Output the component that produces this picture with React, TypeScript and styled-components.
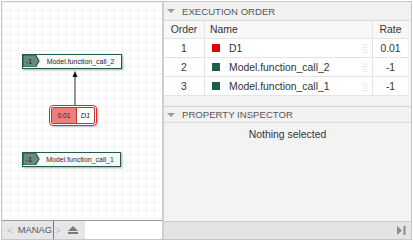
import styled, { createGlobalStyle } from 'styled-components';

const GlobalStyle = createGlobalStyle`
  html, body {
    margin: 0;
    padding: 0;
    background: #fff;
  }
  body {
    font-family: "Liberation Sans", Arial, sans-serif;
  }
`;

// Outer window
const Frame = styled.div`
  margin: 1px 0 0 1px;
  width: 411px;
  height: 239px;
  box-sizing: border-box;
  border: 1px solid #c6c6c6;
  display: flex;
`;

const LeftPane = styled.div`
  width: 160px;
  display: flex;
  flex-direction: column;
`;

const Divider = styled.div`
  width: 2px;
  background: #cfcfcf;
`;

const RightPane = styled.div`
  flex: 1;
  display: flex;
  flex-direction: column;
  background: #f3f3f3;
`;

// Diagram canvas
const Canvas = styled.div`
  position: relative;
  flex: 1;
  background-color: #fff;
  background-image:
    linear-gradient(to right, #f4f4f4 1px, transparent 1px),
    linear-gradient(to bottom, #f4f4f4 1px, transparent 1px);
  background-size: 8px 8px;
  border-bottom: 1px solid #9a9a9a;
`;

const FcNode = styled.div<{ $x: number; $y: number; $w: number }>`
  position: absolute;
  left: ${p => p.$x}px;
  top: ${p => p.$y}px;
  width: ${p => p.$w}px;
  height: 15px;
  box-sizing: border-box;
  border: 1.5px solid #215a48;
  background: #f8f8f8;
  box-shadow: 1px 1px 2px rgba(0, 0, 0, 0.35);
  display: flex;
  align-items: stretch;
`;

const Badge = styled.div`
  position: relative;
  width: 17px;
  display: flex;
  align-items: center;
  padding-left: 3px;
  box-sizing: border-box;
  font-size: 7px;
  color: #111;

  svg {
    position: absolute;
    left: 0;
    top: 0;
  }
  span {
    position: relative;
  }
`;

const FcLabel = styled.div`
  flex: 1;
  display: flex;
  align-items: center;
  justify-content: center;
  font-size: 7px;
  color: #2a2a2a;
  white-space: nowrap;
`;

const RateNode = styled.div`
  position: absolute;
  left: 47px;
  top: 103px;
  width: 48px;
  height: 21px;
  box-sizing: border-box;
  border: 1.5px solid #e2262c;
  border-radius: 4px;
  background: #fff;
  padding: 1px;
  box-shadow: 1px 1px 2px rgba(0, 0, 0, 0.25);
`;

const RateInner = styled.div`
  height: 100%;
  box-sizing: border-box;
  border: 1px solid #c0392b;
  border-radius: 2px;
  display: flex;
  overflow: hidden;
`;

const RateValue = styled.div`
  width: 24px;
  background: #ef7d7d;
  border-right: 1px solid #c0392b;
  display: flex;
  align-items: center;
  justify-content: center;
  font-size: 6.5px;
  color: #222;
`;

const RateName = styled.div`
  flex: 1;
  display: flex;
  align-items: center;
  justify-content: center;
  font-size: 7.5px;
  font-style: italic;
  color: #222;
`;

const Arrow = styled.svg`
  position: absolute;
  left: 67px;
  top: 68px;
`;

const LeftBar = styled.div`
  height: 18px;
  display: flex;
  background: #fff;
`;

const TabStrip = styled.div`
  width: 83px;
  background: #e6e6e6;
  display: flex;
  align-items: center;
  font-size: 9.3px;
  color: #4a5666;
`;

const Chevron = styled.span<{ $right?: boolean }>`
  color: #c0c0c0;
  font-size: 10px;
  padding: ${p => (p.$right ? '0 7px 0 1px' : '0 5px 0 5px')};
`;

const TabName = styled.span`
  height: 100%;
  display: flex;
  align-items: center;
  padding-right: 1px;
  border-right: 1px solid #7a7a7a;
  box-sizing: border-box;
  white-space: nowrap;
`;

// Right side panels
const SectionHeader = styled.div<{ $h: number }>`
  height: ${p => p.$h}px;
  box-sizing: border-box;
  background: #f1f1f1;
  border-bottom: 1px solid #dadada;
  display: flex;
  align-items: center;
  padding-left: 3px;
  font-size: 9.6px;
  color: #585858;
  gap: 7px;
`;

const Caret = styled.svg`
  flex: none;
`;

const Table = styled.div`
  margin-right: 3px;
  background: #fff;
`;

const Row = styled.div<{ $head?: boolean }>`
  display: grid;
  grid-template-columns: 41px 1fr 35px;
  height: ${p => (p.$head ? 18 : 19)}px;
  border-bottom: 1px solid #e4e4e4;
  box-sizing: border-box;
  background: ${p => (p.$head ? '#f8f8f8' : '#fff')};
  font-size: 10.4px;
  color: #333;
`;

const Cell = styled.div<{ $align?: string; $line?: boolean }>`
  display: flex;
  align-items: center;
  justify-content: ${p => p.$align || 'flex-start'};
  border-right: ${p => (p.$line ? '1px solid #e4e4e4' : 'none')};
  padding: 0 5px;
  gap: 9px;
  white-space: nowrap;
  overflow: hidden;
`;

const Swatch = styled.span<{ $color: string }>`
  width: 8px;
  height: 8px;
  background: ${p => p.$color};
  flex: none;
  margin-left: 2px;
`;

const NameText = styled.span`
  flex: 1;
`;

const Grip = styled.svg`
  flex: none;
  margin-right: -1px;
`;

const Filler = styled.div`
  height: 10px;
  border-bottom: 1px solid #d2d2d2;
`;

const Inspector = styled.div`
  flex: 1;
  text-align: center;
  padding-top: 6px;
  font-size: 10.4px;
  color: #333;
`;

const RightBar = styled.div`
  height: 18px;
  box-sizing: border-box;
  border-top: 1px solid #c8c8c8;
  background: #e4e4e4;
  display: flex;
  align-items: center;
  justify-content: flex-end;
  padding-right: 5px;
`;

const rows = [
  { order: 1, name: 'D1', color: '#e30000', rate: '0.01' },
  { order: 2, name: 'Model.function_call_2', color: '#1d5e4b', rate: '-1' },
  { order: 3, name: 'Model.function_call_1', color: '#1d5e4b', rate: '-1' }
];

const BadgeShape = () => (
  <svg width="17" height="12" viewBox="0 0 17 12">
    <polygon points="0,0 12.5,0 16,6 12.5,12 0,12" fill="#6b8a7d" stroke="#215a48" strokeWidth="1.2" />
  </svg>
);

const FunctionNode = ({ x, y, w, label }: { x: number; y: number; w: number; label: string }) => (
  <FcNode $x={x} $y={y} $w={w}>
    <Badge>
      <BadgeShape />
      <span>-1</span>
    </Badge>
    <FcLabel>{label}</FcLabel>
  </FcNode>
);

const CaretDown = () => (
  <Caret width="8" height="6" viewBox="0 0 8 6">
    <polygon points="0,1 8,1 4,5" fill="#9a9a9a" />
  </Caret>
);

const GripIcon = () => (
  <Grip width="5" height="9" viewBox="0 0 5 9">
    {[1, 3.5, 6, 8.5].map(y => (
      <line key={y} x1="0" y1={y} x2="5" y2={y} stroke="#dcdcdc" strokeWidth="1" strokeDasharray="1 0.6" />
    ))}
  </Grip>
);

export default function App() {
  return (
    <>
      <GlobalStyle />
      <Frame>
        <LeftPane>
          <Canvas>
            <FunctionNode x={20} y={52} w={100} label="Model.function_call_2" />
            <Arrow width="12" height="36" viewBox="0 0 12 36">
              <line x1="6" y1="5" x2="6" y2="36" stroke="#555" strokeWidth="1.2" />
              <polygon points="6,1 3.5,7 8.5,7" fill="#111" />
            </Arrow>
            <RateNode>
              <RateInner>
                <RateValue>0.01</RateValue>
                <RateName>D1</RateName>
              </RateInner>
            </RateNode>
            <FunctionNode x={20} y={150} w={99} label="Model.function_call_1" />
          </Canvas>
          <LeftBar>
            <TabStrip>
              <Chevron>&lt;</Chevron>
              <TabName>MANAG</TabName>
              <Chevron $right>&gt;</Chevron>
              <svg width="10" height="8" viewBox="0 0 10 8">
                <polygon points="5,0 10,5 0,5" fill="#7a7a7a" />
                <rect x="0" y="6" width="10" height="2" fill="#7a7a7a" />
              </svg>
            </TabStrip>
          </LeftBar>
        </LeftPane>
        <Divider />
        <RightPane>
          <SectionHeader $h={19}>
            <CaretDown />
            EXECUTION ORDER
          </SectionHeader>
          <Table>
            <Row $head>
              <Cell $align="center" $line>Order</Cell>
              <Cell $line>Name</Cell>
              <Cell $align="center">Rate</Cell>
            </Row>
            {rows.map(r => (
              <Row key={r.order}>
                <Cell $align="center" $line>{r.order}</Cell>
                <Cell $line>
                  <Swatch $color={r.color} />
                  <NameText>{r.name}</NameText>
                  <GripIcon />
                </Cell>
                <Cell $align="center">{r.rate}</Cell>
              </Row>
            ))}
          </Table>
          <Filler />
          <SectionHeader $h={16}>
            <CaretDown />
            PROPERTY INSPECTOR
          </SectionHeader>
          <Inspector>Nothing selected</Inspector>
          <RightBar>
            <svg width="9" height="9" viewBox="0 0 9 9">
              <polygon points="0,0 5,4.5 0,9" fill="#8a8a8a" />
              <rect x="6.5" y="0" width="2" height="9" fill="#8a8a8a" />
            </svg>
          </RightBar>
        </RightPane>
      </Frame>
    </>
  );
}
